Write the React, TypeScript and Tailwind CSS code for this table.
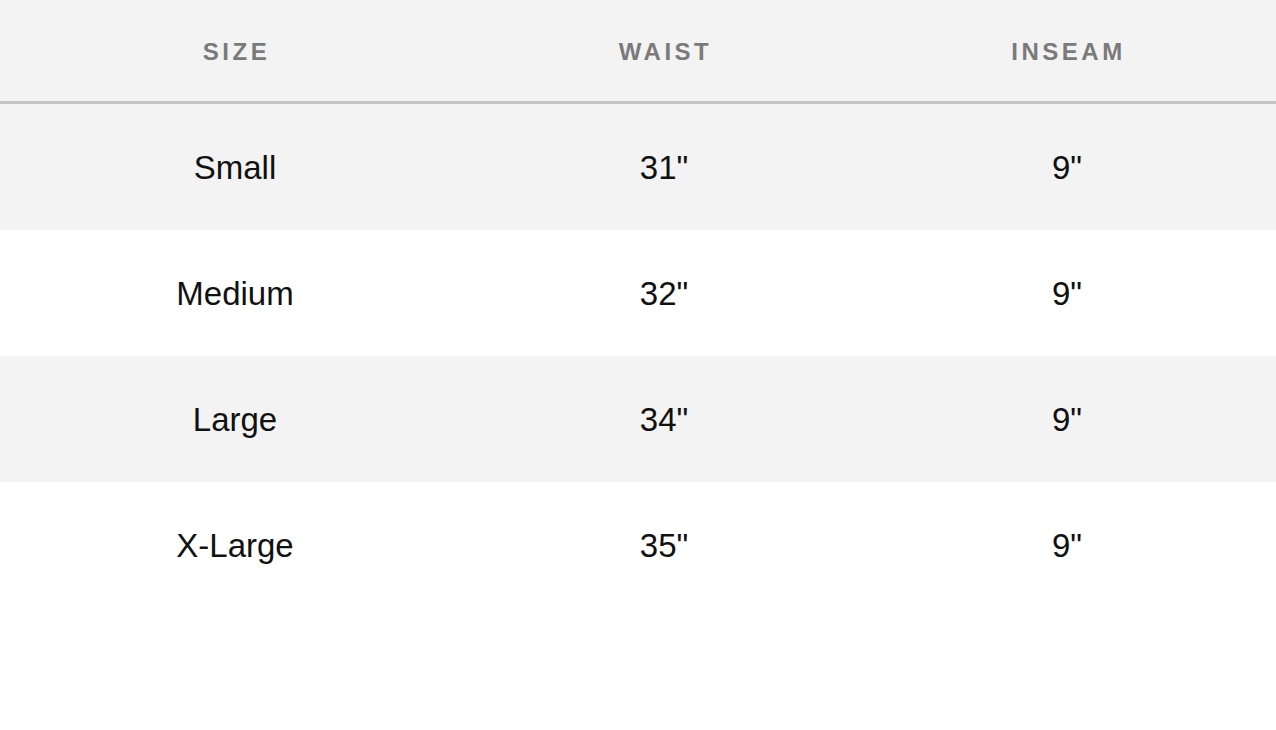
import React from "react";

const rows = [
  { size: "Small", waist: '31"', inseam: '9"' },
  { size: "Medium", waist: '32"', inseam: '9"' },
  { size: "Large", waist: '34"', inseam: '9"' },
  { size: "X-Large", waist: '35"', inseam: '9"' },
];

const App = () => {
  return (
    <div className="w-full min-h-[730px] bg-white font-['Liberation_Sans',Arial,sans-serif]">
      {/* Header */}
      <div className="grid grid-cols-[470px_388px_1fr] h-[104px] pt-[2px] bg-[#f3f3f3] border-b-[3px] border-[#c4c4c4] text-[24px] font-semibold tracking-[3.5px] text-[#7a7a7a]">
        <div className="flex items-center justify-center pl-[3px]">SIZE</div>
        <div className="flex items-center justify-center pl-[3px]">WAIST</div>
        <div className="flex items-center justify-center pl-[3px]">INSEAM</div>
      </div>

      {/* Rows */}
      {rows.map((r, i) => (
        <div
          key={r.size}
          className={
            "grid grid-cols-[470px_388px_1fr] h-[126px] pt-[2px] text-[33px] text-[#111111] " +
            (i % 2 === 0 ? "bg-[#f3f3f3]" : "bg-white")
          }
        >
          <div className="flex items-center justify-center">{r.size}</div>
          <div className="flex items-center justify-center">{r.waist}</div>
          <div className="flex items-center justify-center">{r.inseam}</div>
        </div>
      ))}
    </div>
  );
};

export default App;
